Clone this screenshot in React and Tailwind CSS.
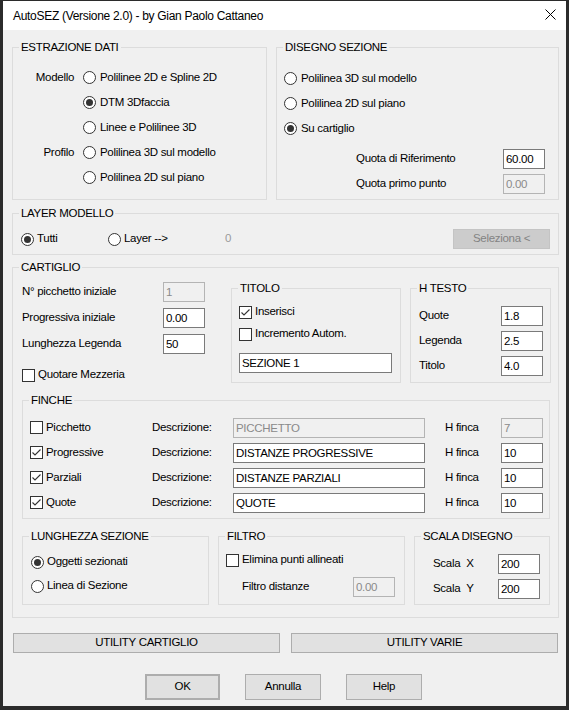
import React from "react";

const Radio = ({ checked }) => (
  <span className="flex h-[13px] w-[13px] shrink-0 items-center justify-center rounded-full border border-[#333333] bg-white">
    {checked && <span className="h-[7px] w-[7px] rounded-full bg-[#333333]" />}
  </span>
);

const Check = ({ checked }) => (
  <span className="flex h-[13px] w-[13px] shrink-0 items-center justify-center border border-[#333333] bg-white">
    {checked && (
      <svg width="11" height="11" viewBox="0 0 11 11" fill="none">
        <path d="M1.5 5.5 L4 8 L9.5 2.5" stroke="#333333" strokeWidth="1.1" />
      </svg>
    )}
  </span>
);

const TextBox = ({ value, disabled, className = "" }) => (
  <input
    readOnly
    defaultValue={value}
    className={
      "h-[20px] shrink-0 border pl-[2px] outline-none " +
      (disabled
        ? "border-[#b4b4b4] bg-[#f0f0f0] text-[#8a8a8a] "
        : "border-[#7a7a7a] bg-white text-black ") +
      className
    }
  />
);

const Group = ({ title, className = "", children }) => (
  <fieldset className={"shrink-0 border border-[#dcdcdc] " + className}>
    <legend className="ml-[6px] px-[2px] leading-[14px]">{title}</legend>
    {children}
  </fieldset>
);

const Button = ({ children, className = "" }) => (
  <button
    type="button"
    className={
      "flex shrink-0 items-center justify-center border border-[#adadad] bg-[#e1e1e1] " +
      className
    }
  >
    {children}
  </button>
);

const RadioRow = ({ label, checked, children }) => (
  <div className="flex h-[25px] items-center">
    <span className="w-[61px] text-right">{label}</span>
    <span className="ml-[9px]">
      <Radio checked={checked} />
    </span>
    <span className="ml-[4px]">{children}</span>
  </div>
);

const finche = [
  { name: "Picchetto", desc: "PICCHETTO", h: "7", on: false },
  { name: "Progressive", desc: "DISTANZE PROGRESSIVE", h: "10", on: true },
  { name: "Parziali", desc: "DISTANZE PARZIALI", h: "10", on: true },
  { name: "Quote", desc: "QUOTE", h: "10", on: true },
];

export default function App() {
  return (
    <div className="h-[710px] w-[569px] overflow-hidden bg-[#2b2b2b] pl-[3px] pt-[1px] font-['Liberation_Sans',Arial,sans-serif] text-[11.5px] tracking-[-0.3px] text-black">
      <div className="flex h-[705px] w-[563px] flex-col bg-[#f0f0f0]">
        {/* title bar */}
        <div className="flex h-[29px] shrink-0 items-center justify-between bg-white pl-[10px] pr-[10px]">
          <span className="text-[12px]">
            AutoSEZ (Versione 2.0) - by Gian Paolo Cattaneo
          </span>
          <svg width="11" height="11" viewBox="0 0 11 11" className="mb-[2px]">
            <path d="M0.5 0.5 L10.5 10.5 M10.5 0.5 L0.5 10.5" stroke="#000" strokeWidth="1" />
          </svg>
        </div>

        <div className="flex flex-col pl-[9px] pr-[7px] pt-[10px]">
          {/* top row */}
          <div className="flex gap-[9px]">
            <Group title="ESTRAZIONE DATI" className="h-[160px] w-[255px]">
              <div className="pt-[11px]">
                <RadioRow label="Modello">Polilinee 2D e Spline 2D</RadioRow>
                <RadioRow checked>DTM 3Dfaccia</RadioRow>
                <RadioRow>Linee e Polilinee 3D</RadioRow>
                <RadioRow label="Profilo">Polilinea 3D sul modello</RadioRow>
                <RadioRow>Polilinea 2D sul piano</RadioRow>
              </div>
            </Group>

            <Group title="DISEGNO SEZIONE" className="h-[160px] w-[283px]">
              <div className="pl-[7px] pt-[12px]">
                {[
                  ["Polilinea 3D sul modello", false],
                  ["Polilinea 2D sul piano", false],
                  ["Su cartiglio", true],
                ].map(([t, c]) => (
                  <div key={t} className="flex h-[25px] items-center">
                    <Radio checked={c} />
                    <span className="ml-[4px]">{t}</span>
                  </div>
                ))}
                <div className="mt-[5px] flex h-[25px] items-center pl-[72px]">
                  <span className="w-[147px]">Quota di Riferimento</span>
                  <TextBox value="60.00" className="w-[42px]" />
                </div>
                <div className="flex h-[25px] items-center pl-[72px]">
                  <span className="w-[147px]">Quota primo punto</span>
                  <TextBox value="0.00" disabled className="h-[19px] w-[42px]" />
                </div>
              </div>
            </Group>
          </div>

          {/* layer modello */}
          <Group title="LAYER MODELLO" className="mt-[6px] h-[49px] w-[547px]">
            <div className="flex items-center pl-[8px] pr-[8px] pt-[9px]">
              <Radio checked />
              <span className="ml-[3px] w-[71px]">Tutti</span>
              <Radio />
              <span className="ml-[3px] w-[101px]">Layer --&gt;</span>
              <span className="text-[#9a9a9a]">0</span>
              <button
                type="button"
                className="ml-auto flex h-[20px] w-[97px] items-center justify-center border border-[#c4c4c4] bg-[#cccccc] text-[#838383]"
              >
                Seleziona &lt;
              </button>
            </div>
          </Group>

          {/* cartiglio */}
          <Group title="CARTIGLIO" className="mt-[5px] h-[358px] w-[547px]">
            <div className="flex h-[109px] items-start">
              <div className="w-[218px] shrink-0 pl-[9px] pt-[5px]">
                {[
                  ["N° picchetto iniziale", "1", true],
                  ["Progressiva iniziale", "0.00", false],
                  ["Lunghezza Legenda", "50", false],
                ].map(([l, v, d]) => (
                  <div key={l} className="flex h-[26px] items-center">
                    <span className="w-[141px]">{l}</span>
                    <TextBox value={v} disabled={d} className="h-[19px] w-[42px]" />
                  </div>
                ))}
                <div className="mt-[7px] flex h-[22px] items-center">
                  <Check />
                  <span className="ml-[3px]">Quotare Mezzeria</span>
                </div>
              </div>

              <Group title="TITOLO" className="mt-[7px] h-[102px] w-[170px]">
                <div className="pl-[7px] pt-[6px]">
                  <div className="flex h-[22px] items-center">
                    <Check checked />
                    <span className="ml-[3px]">Inserisci</span>
                  </div>
                  <div className="flex h-[22px] items-center">
                    <Check />
                    <span className="ml-[3px]">Incremento Autom.</span>
                  </div>
                  <TextBox value="SEZIONE 1" className="mt-[8px] h-[19px] w-[153px]" />
                </div>
              </Group>

              <Group title="H TESTO" className="ml-[9px] mt-[7px] h-[102px] w-[141px]">
                <div className="flex flex-col gap-[6px] pl-[8px] pt-[11px]">
                  {[
                    ["Quote", "1.8"],
                    ["Legenda", "2.5"],
                    ["Titolo", "4.0"],
                  ].map(([l, v]) => (
                    <div key={l} className="flex h-[19px] items-center">
                      <span className="w-[82px]">{l}</span>
                      <TextBox value={v} className="h-[19px] w-[42px]" />
                    </div>
                  ))}
                </div>
              </Group>
            </div>

            <Group title="FINCHE" className="ml-[9px] mt-[10px] h-[126px] w-[528px]">
              <div className="pl-[7px] pt-[8px]">
                {finche.map((f) => (
                  <div key={f.name} className="flex h-[25px] items-center">
                    <Check checked={f.on} />
                    <span className="ml-[3px] w-[106px]">{f.name}</span>
                    <span className="w-[81px]">Descrizione:</span>
                    <TextBox value={f.desc} disabled={!f.on} className="w-[192px]" />
                    <span className="ml-[20px] w-[56px]">H finca</span>
                    <TextBox value={f.h} disabled={!f.on} className="w-[42px]" />
                  </div>
                ))}
              </div>
            </Group>

            <div className="ml-[9px] mt-[10px] flex gap-[9px]">
              <Group title="LUNGHEZZA SEZIONE" className="h-[76px] w-[187px]">
                <div className="pl-[8px] pt-[7px]">
                  <div className="flex h-[24px] items-center">
                    <Radio checked />
                    <span className="ml-[3px]">Oggetti sezionati</span>
                  </div>
                  <div className="flex h-[24px] items-center">
                    <Radio />
                    <span className="ml-[3px]">Linea di Sezione</span>
                  </div>
                </div>
              </Group>

              <Group title="FILTRO" className="h-[76px] w-[187px]">
                <div className="pl-[7px] pt-[6px]">
                  <div className="flex h-[22px] items-center">
                    <Check />
                    <span className="ml-[3px]">Elimina punti allineati</span>
                  </div>
                  <div className="mt-[6px] flex h-[20px] items-center pl-[16px]">
                    <span className="w-[111px]">Filtro distanze</span>
                    <TextBox value="0.00" disabled className="h-[19px] w-[42px]" />
                  </div>
                </div>
              </Group>

              <Group title="SCALA DISEGNO" className="h-[76px] w-[136px]">
                <div className="flex flex-col gap-[6px] pl-[18px] pt-[11px]">
                  {["X", "Y"].map((a) => (
                    <div key={a} className="flex h-[19px] items-center">
                      <span className="w-[65px]">
                        Scala<span className="ml-[6px]">{a}</span>
                      </span>
                      <TextBox value="200" className="h-[19px] w-[42px]" />
                    </div>
                  ))}
                </div>
              </Group>
            </div>
          </Group>

          {/* utility buttons */}
          <div className="mt-[15px] flex gap-[11px] pl-[1px]">
            <Button className="h-[20px] w-[267px]">UTILITY CARTIGLIO</Button>
            <Button className="h-[20px] w-[267px]">UTILITY VARIE</Button>
          </div>

          <div className="mt-[21px] flex gap-[25px] pl-[133px]">
            <Button className="h-[26px] w-[75px] border-2 border-[#0078d7]">OK</Button>
            <Button className="h-[26px] w-[76px]">Annulla</Button>
            <Button className="h-[26px] w-[76px]">Help</Button>
          </div>
        </div>
      </div>
    </div>
  );
}
